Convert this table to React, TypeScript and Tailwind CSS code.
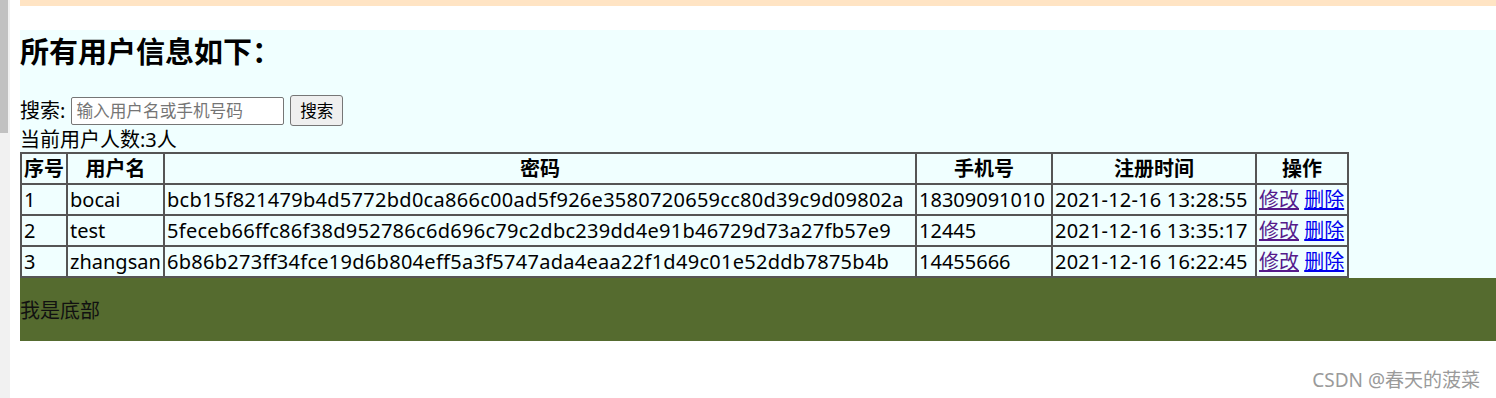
import React from "react";

const rows = [
  { id: "1", name: "bocai", pwd: "bcb15f821479b4d5772bd0ca866c00ad5f926e3580720659cc80d39c9d09802a", phone: "18309091010", time: "2021-12-16 13:28:55" },
  { id: "2", name: "test", pwd: "5feceb66ffc86f38d952786c6d696c79c2dbc239dd4e91b46729d73a27fb57e9", phone: "12445", time: "2021-12-16 13:35:17" },
  { id: "3", name: "zhangsan", pwd: "6b86b273ff34fce19d6b804eff5a3f5747ada4eaa22f1d49c01e52ddb7875b4b", phone: "14455666", time: "2021-12-16 16:22:45" },
];

const font = { fontFamily: '"Noto Sans", "Noto Sans CJK SC", sans-serif' };

export default function App() {
  const th = "border border-[#555] px-[1px] py-0 leading-[29px] font-bold text-center";
  const td = "border border-[#555] px-[2px] py-0 leading-[29px] text-left whitespace-nowrap overflow-hidden";
  return (
    <div className="relative flex w-[1496px] h-[398px] bg-white text-black text-[20px] overflow-hidden" style={font}>
      <div className="w-[10px] h-full bg-[#f1f1f1] shrink-0">
        <div className="w-[8px] h-[133px] bg-[#c1c1c1]" />
      </div>
      <div className="flex-1 pl-[10px] flex flex-col">
        <div className="h-[6px] bg-[#ffe4c4]" />
        <div className="h-[24px]" />
        <div className="bg-[#f0ffff] pt-[2px]">
          <h2 className="text-[29px] font-bold leading-[40px] m-0">所有用户信息如下：</h2>
          <div className="mt-[23px] h-[31px] flex items-center">
            <span className="leading-[24px]">搜索:</span>
            <input
              className="ml-[6px] w-[213px] h-[28px] border border-[#767676] rounded-[2px] bg-white px-[4px] text-[16.67px] placeholder:text-[#757575] outline-none"
              placeholder="输入用户名或手机号码"
            />
            <button className="ml-[6px] w-[53px] h-[31px] border border-[#767676] rounded-[3px] bg-[#efefef] text-[16.67px] leading-[20px] text-black">
              搜索
            </button>
          </div>
          <div className="h-[26px] leading-[27px]">当前用户人数:3人</div>
          <table className="table-fixed w-[1329px] border border-[#555] border-separate border-spacing-0">
            <thead>
              <tr>
                <th className={`${th} w-[46px]`}>序号</th>
                <th className={`${th} w-[97px]`}>用户名</th>
                <th className={`${th} w-[752px]`}>密码</th>
                <th className={`${th} w-[136px]`}>手机号</th>
                <th className={`${th} w-[204px]`}>注册时间</th>
                <th className={`${th} w-[92px]`}>操作</th>
              </tr>
            </thead>
            <tbody>
              {rows.map((r) => (
                <tr key={r.id}>
                  <td className={td}>{r.id}</td>
                  <td className={td}>{r.name}</td>
                  <td className={`${td} tracking-[0.28px]`}>{r.pwd}</td>
                  <td className={td}>{r.phone}</td>
                  <td className={`${td} tracking-[0.2px]`}>{r.time}</td>
                  <td className={td}>
                    <a href="#" className="text-[#551a8b] underline">修改</a>{" "}
                    <a href="#" className="text-[#0000ee] underline">删除</a>
                  </td>
                </tr>
              ))}
            </tbody>
          </table>
        </div>
        <div className="bg-[#556b2f] h-[63px] flex items-center">
          <p className="m-0 leading-[24px] text-[#111] pt-[2px]">我是底部</p>
        </div>
      </div>
      <div className="absolute right-[16px] top-[367px] text-[19px] leading-[26px] text-[#9a9a9a]">CSDN @春天的菠菜</div>
    </div>
  );
}
